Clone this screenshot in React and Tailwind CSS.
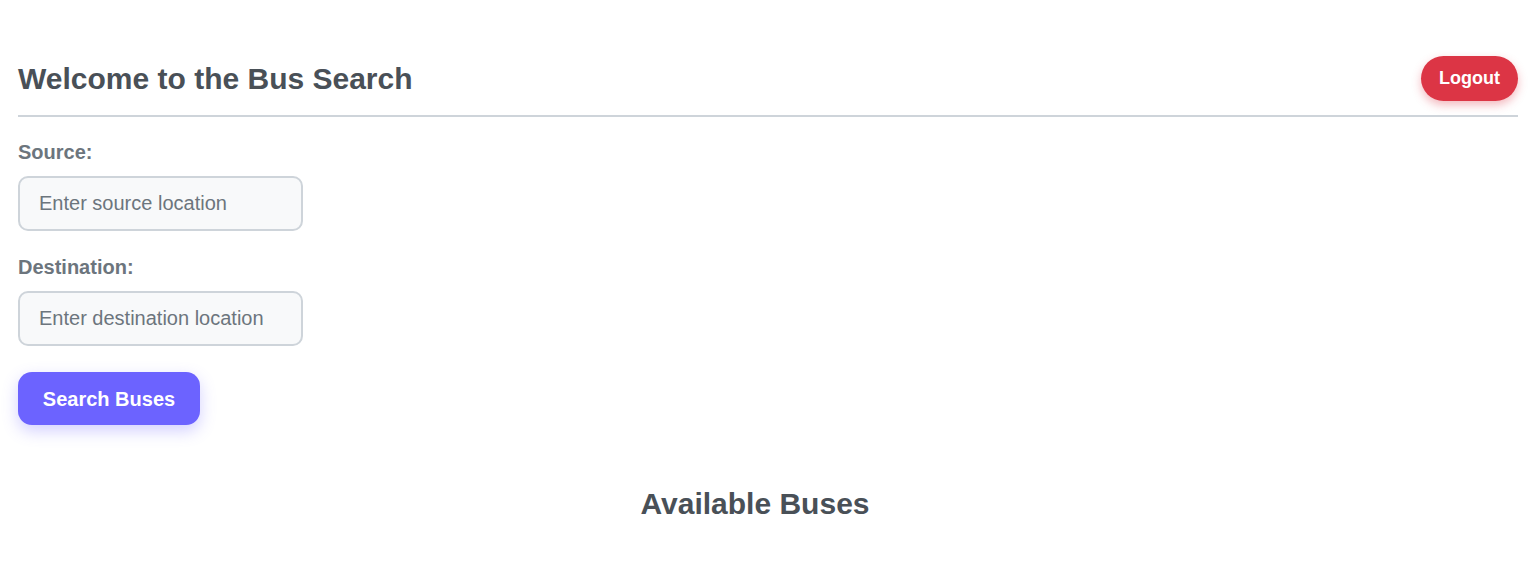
import React, { useState } from 'react';

const App = () => {
  const [source, setSource] = useState('');
  const [destination, setDestination] = useState('');

  return (
    <div className="min-h-screen bg-white pl-[18px] pr-[22px] pt-[56px] font-['Liberation_Sans',Arial,sans-serif]">
      <div className="flex items-center justify-between border-b-2 border-[#ced4da] pb-[14px]">
        <h1 className="text-[30px] font-bold text-[#495057] leading-none">Welcome to the Bus Search</h1>
        <button className="h-[45px] px-[18px] rounded-full bg-[#dc3545] text-white text-[18px] font-bold shadow-[0_4px_10px_rgba(220,53,69,0.35)]">
          Logout
        </button>
      </div>

      <div className="mt-[25px] flex flex-col items-start">
        <label className="text-[20px] font-bold text-[#6c757d] leading-none">Source:</label>
        <input
          type="text"
          value={source}
          onChange={(e) => setSource(e.target.value)}
          placeholder="Enter source location"
          className="mt-[14px] w-[285px] h-[55px] px-[19px] rounded-[10px] border-2 border-[#ced4da] bg-[#f8f9fa] text-[20px] text-[#495057] placeholder:text-[#6c757d] outline-none"
        />
        <label className="mt-[26px] text-[20px] font-bold text-[#6c757d] leading-none">Destination:</label>
        <input
          type="text"
          value={destination}
          onChange={(e) => setDestination(e.target.value)}
          placeholder="Enter destination location"
          className="mt-[14px] w-[285px] h-[55px] px-[19px] rounded-[10px] border-2 border-[#ced4da] bg-[#f8f9fa] text-[20px] text-[#495057] placeholder:text-[#6c757d] outline-none"
        />
        <button className="mt-[26px] w-[182px] h-[53px] rounded-[14px] bg-[#6c63ff] text-white text-[20px] font-bold shadow-[0_6px_16px_rgba(108,99,255,0.3)]">
          Search Buses
        </button>
      </div>

      <h2 className="mt-[64px] pr-[26px] text-center text-[30px] font-bold text-[#495057] leading-none">Available Buses</h2>
    </div>
  );
};

export default App;
